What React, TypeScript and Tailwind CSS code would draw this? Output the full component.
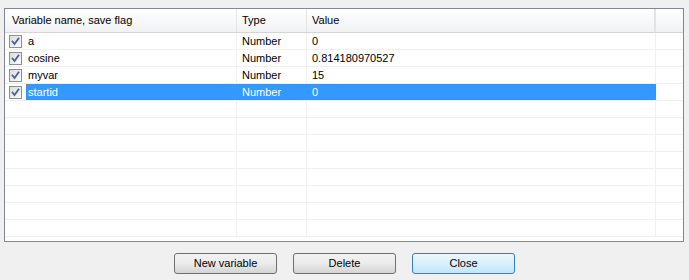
import React from "react";

const rows = [
  { name: "a", type: "Number", value: "0" },
  { name: "cosine", type: "Number", value: "0.814180970527" },
  { name: "myvar", type: "Number", value: "15" },
  { name: "startid", type: "Number", value: "0", selected: true },
];

function Check() {
  return (
    <div className="w-[13px] h-[13px] border border-[#8e8f8f] bg-gradient-to-br from-[#dcdcdc] to-[#fbfbfb] flex items-center justify-center shrink-0">
      <svg width="11" height="11" viewBox="0 0 11 11">
        <path d="M2.5 5.5 L4.5 8 L8.5 2.5" stroke="#4a5f97" strokeWidth="1.8" fill="none" strokeLinecap="square" />
      </svg>
    </div>
  );
}

function Btn({ label, def }: { label: string; def?: boolean }) {
  return (
    <div
      className={
        "w-[103px] h-[21px] rounded-[3px] border flex items-center justify-center text-[11px] text-black " +
        (def
          ? "border-[#3c7fb1] bg-gradient-to-b from-[#eaf6fd] via-[#d9f0fc] to-[#bee6fd]"
          : "border-[#707070] bg-gradient-to-b from-[#f2f2f2] via-[#ebebeb] to-[#d4d4d4]")
      }
    >
      {label}
    </div>
  );
}

export default function App() {
  const empty = Array.from({ length: 8 });
  return (
    <div
      className="w-[689px] h-[280px] bg-[#f0f0f0] pt-[8px] px-[4px] text-[11px] text-black"
      style={{ fontFamily: '"Liberation Sans", Arial, sans-serif' }}
    >
      <div className="w-[680px] h-[234px] border border-[#828790] bg-white overflow-hidden">
        <div className="grid grid-cols-[232px_70px_349px_27px] h-[24px] border-b border-[#d5d5d5] bg-gradient-to-b from-[#ffffff] to-[#f1f2f5]">
          <div className="pl-[7px] flex items-center border-r border-[#e5e5e5]">Variable name, save flag</div>
          <div className="pl-[5px] flex items-center border-r border-[#e5e5e5]">Type</div>
          <div className="pl-[5px] flex items-center border-r-2 border-[#e3e3e3]">Value</div>
          <div></div>
        </div>
        {rows.map((r) => (
          <div key={r.name} className="flex h-[17px] border-b border-[#f0f0f0]">
            <div className="w-[21px] shrink-0 flex items-center pl-[4px]">
              <Check />
            </div>
            <div
              className={
                "flex h-full " +
                (r.selected ? "bg-[#3399ff] text-white outline outline-1 outline-dotted outline-offset-[-1px] outline-[#c56a31]" : "")
              }
            >
              <div className={"w-[211px] flex items-center pl-[2px] border-r " + (r.selected ? "border-[#3399ff]" : "border-[#f0f0f0]")}>
                {r.name}
              </div>
              <div className={"w-[70px] flex items-center pl-[5px] border-r " + (r.selected ? "border-[#3399ff]" : "border-[#f0f0f0]")}>
                {r.type}
              </div>
              <div className={"w-[349px] flex items-center pl-[5px] border-r " + (r.selected ? "border-[#3399ff]" : "border-[#f0f0f0]")}>
                {r.value}
              </div>
            </div>
            <div className="w-[27px]"></div>
          </div>
        ))}
        {empty.map((_, i) => (
          <div key={i} className="grid grid-cols-[232px_70px_349px_27px] h-[17px] border-b border-[#f0f0f0]">
            <div className="border-r border-[#f0f0f0]"></div>
            <div className="border-r border-[#f0f0f0]"></div>
            <div className="border-r border-[#f0f0f0]"></div>
            <div></div>
          </div>
        ))}
      </div>
      <div className="flex justify-center gap-[16px] mt-[11px]">
        <Btn label="New variable" />
        <Btn label="Delete" />
        <Btn label="Close" def />
      </div>
    </div>
  );
}
